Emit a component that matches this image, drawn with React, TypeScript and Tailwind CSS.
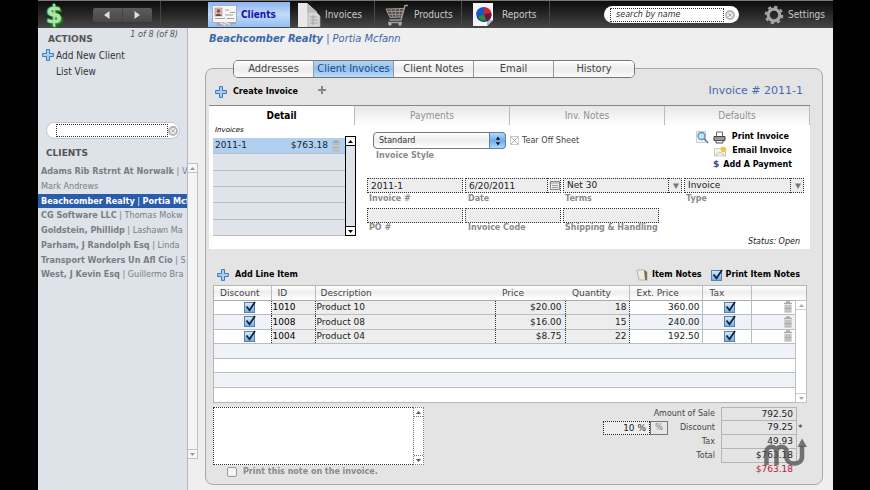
import { useState } from 'react';
import { clsx } from 'clsx';

const condensed = 'font-["DejaVu_Sans_Condensed","DejaVu_Sans",sans-serif]';
const caption = 'text-[8px] leading-[10px] font-bold text-[#8a8a8a]';
const field = 'block h-[15px] w-full min-w-0 border border-dotted border-[#333] bg-[#ededed] px-[3px] text-[9px] leading-[13px] text-[#222] rounded-none outline-none';

const clients = [
  { company: 'Adams Rib Rstrnt At Norwalk', contact: 'V' },
  { company: '', contact: 'Mark Andrews' },
  { company: 'Beachcomber Realty', contact: 'Portia Mcf' },
  { company: 'CG Software LLC', contact: 'Thomas Mokw' },
  { company: 'Goldstein, Phillidp', contact: 'Lashawn Ma' },
  { company: 'Parham, J Randolph Esq', contact: 'Linda' },
  { company: 'Transport Workers Un Afl Cio', contact: 'S' },
  { company: 'West, J Kevin Esq', contact: 'Guillermo Bra' },
];

const lineItems = [
  { id: '1010', description: 'Product 10', price: '$20.00', quantity: '18', ext: '360.00' },
  { id: '1008', description: 'Product 08', price: '$16.00', quantity: '15', ext: '240.00' },
  { id: '1004', description: 'Product 04', price: '$8.75', quantity: '22', ext: '192.50' },
];

const emptyRows = ['a', 'b', 'c', 'd'];

const totals = [
  { label: 'Amount of Sale', value: '792.50' },
  { label: 'Discount', value: '79.25' },
  { label: 'Tax', value: '49.93' },
  { label: 'Total', value: '$763.18' },
];

const clientTabs = ['Addresses', 'Client Invoices', 'Client Notes', 'Email', 'History'];
const detailTabs = ['Detail', 'Payments', 'Inv. Notes', 'Defaults'];

function PlusIcon() {
  return (
    <svg viewBox="0 0 12 12" className="h-3 w-3 shrink-0">
      <path d="M4.5 .6h3v3.9h3.9v3H7.500v3.900h-3V7.500H.6v-3h3.900z" fill="#a9cdf3" stroke="#3c78bd" />
    </svg>
  );
}

function TrashIcon() {
  return (
    <svg viewBox="0 0 10 12" className="block h-3 w-[10px] shrink-0">
      <path d="M1 2.500h8M3 1h4" stroke="#aaa" strokeWidth="1.500" />
      <path d="M1.800 4.500h6.400v6.700H1.800z" fill="#d6d6d6" stroke="#b0b0b0" strokeWidth=".7" />
      <path d="M3.800 5v6M6.200 5v6M2 7.500h6" stroke="#9c9c9c" strokeWidth=".7" />
    </svg>
  );
}

function ClearIcon() {
  return (
    <svg viewBox="0 0 10 10" className="h-[10px] w-[10px]">
      <circle cx="5" cy="5" r="4" fill="#eee" stroke="#b4b4b9" strokeWidth="1.800" />
      <path d="M3.300 3.300l3.400 3.400M6.700 3.300L3.300 6.700" stroke="#aaa" />
    </svg>
  );
}

function CardsIcon() {
  return (
    <svg viewBox="0 0 26 22" className="h-[22px] w-[26px]">
      <path d="M4 13l18-2 2 9-19 2z" fill="#9ba4b0" />
      <rect x=".5" y="1.500" width="24" height="17" fill="#f7f7f7" stroke="#aab" />
      <rect x="3" y="4" width="7" height="8" fill="#dcb9b4" stroke="#999" strokeWidth=".6" />
      <circle cx="6.500" cy="7" r="1.800" fill="#a2453e" />
      <path d="M3.500 12c.5-3 5.500-3 6 0z" fill="#555" />
      <path d="M13 6h4M18 8.500h5M13 11h8M3 14.500h10M15 14.500h7" stroke="#a3a3a3" />
      <path d="M8 19l6 2M12 18l6 2.500" stroke="#e0e0e0" strokeWidth="1.500" />
    </svg>
  );
}

function PagesIcon() {
  return (
    <svg viewBox="0 0 24 24" className="h-6 w-6">
      <path d="M1 0h9l10 9v15H1z" fill="#e8e8e8" />
      <path d="M10 0v9h10z" fill="#bcbcbc" />
      <path d="M11 9h8l4 4v11H11z" fill="#d6d6d6" stroke="#aaa" strokeWidth=".7" />
      <path d="M13 14h7M13 17h8M13 20h8M16 12v10" stroke="#999" strokeWidth=".8" />
    </svg>
  );
}

function CartIcon() {
  return (
    <svg viewBox="0 0 24 22" className="h-[22px] w-6" fill="none" stroke="#a09b97">
      <path d="M23 1.500h-3L16 16H4.500" strokeWidth="1.400" />
      <path d="M1 5l18-.5L16.500 13 5 13.500z" fill="#55504d" />
      <path d="M2 7.500h16M3.500 10.500h14M6 5l2 8.500M10 5l1 8.500M14.500 5L14 13.500" strokeWidth=".8" />
      <path d="M3 18.500h14" strokeWidth="1.500" />
      <circle cx="5" cy="20" r="1.300" fill="#ccc" />
      <circle cx="15" cy="20" r="1.300" fill="#ccc" />
    </svg>
  );
}

function ChartIcon() {
  return (
    <svg viewBox="0 0 20 23" className="h-[23px] w-5">
      <path d="M0 0h20v17l-6 6H0z" fill="#f5f5f5" />
      <path d="M20 17l-6 6v-6z" fill="#bbb" />
      <ellipse cx="11" cy="12.500" rx="7.500" ry="6.500" fill="#123c78" />
      <path d="M11 11V4a8 7 0 0 0-8 7l2 3z" fill="#1857c4" />
      <path d="M11 11V4a8 7 0 0 1 7.500 6L13 14z" fill="#c8283a" />
      <path d="M11 11l7.500-1c0 4-2 6.500-5.500 7z" fill="#7a1228" />
      <path d="M11 11l2 6.500c-4 .8-7-.5-8-3.500z" fill="#2b8a45" />
    </svg>
  );
}

function GearIcon() {
  return (
    <svg viewBox="0 0 20 20" className="h-5 w-5">
      <circle cx="10" cy="10" r="5.800" fill="none" stroke="#a5a5a5" strokeWidth="3.200" />
      <circle cx="10" cy="10" r="8.200" fill="none" stroke="#a5a5a5" strokeWidth="2.200" strokeDasharray="3.200 3.240" />
    </svg>
  );
}

function DownArrow() {
  return (
    <span className="pointer-events-none absolute inset-y-0 right-0 flex w-[14px] items-center justify-center border-l border-dotted border-[#333]">
      <svg viewBox="0 0 6 6" className="h-[6px] w-[6px]"><path d="M0 .5h6L3 6z" fill="#777" /></svg>
    </span>
  );
}

function Scrollbar({ className, cap, arrow }: { className: string; cap: string; arrow: string }) {
  return (
    <div className={clsx('flex shrink-0 flex-col justify-between border', className)}>
      <span className={clsx('flex h-[9px] items-center justify-center border-b', cap)}>
        <svg viewBox="0 0 5 3" className="h-[3px] w-[5px]"><path d="M0 3h5L2.500 0z" fill={arrow} /></svg>
      </span>
      <span className={clsx('flex h-[9px] items-center justify-center border-t', cap)}>
        <svg viewBox="0 0 5 3" className="h-[3px] w-[5px]"><path d="M0 0h5L2.500 3z" fill={arrow} /></svg>
      </span>
    </div>
  );
}

function Check({ label, id }: { label?: string; id?: string }) {
  const [on, setOn] = useState(true);
  return (
    <span className="relative block h-[11px] w-[11px] shrink-0">
      <input
        id={id}
        type="checkbox"
        aria-label={label}
        checked={on}
        onChange={() => setOn(!on)}
        className="block h-[11px] w-[11px] appearance-none border border-[#5c7fa6] bg-linear-to-b from-[#d5e8fa] to-[#6fb0ea]"
      />
      {on && (
        <svg viewBox="0 0 13 12" className="pointer-events-none absolute -top-px left-0 h-3 w-[13px]">
          <path d="M2.500 5.500l3 3.700L11 1" fill="none" stroke="#12233f" strokeWidth="1.800" />
        </svg>
      )}
    </span>
  );
}

function Header() {
  return (
    <header className={clsx('flex h-7 items-center border-t border-[#777] bg-linear-to-b from-[#0c0c0c] to-[#474747] text-[10px] text-[#c9c9c9]', condensed)}>
      <div className='ml-[7px] w-[18px] text-center font-["DejaVu_Sans",sans-serif] text-[24px] leading-[26px] font-bold text-[#b4e0ac] [text-shadow:1px_1px_0_#1f9c35,-1px_0_0_#1f9c35,0_-1px_0_#1f9c35,2px_2px_1px_#0d7a22]'>$</div>
      <div className="ml-[30px] grid h-[14px] w-[59px] grid-cols-2 rounded-xs bg-linear-to-b from-[#5c5c5c] to-[#484848]">
        <button aria-label="Previous" className="flex items-center justify-center border-r border-[#444]">
          <svg viewBox="0 0 6 8" className="h-2 w-[6px]"><path d="M5.500 0v8L0 4z" fill="#ddd" /></svg>
        </button>
        <button aria-label="Next" className="flex items-center justify-center">
          <svg viewBox="0 0 6 8" className="h-2 w-[6px]"><path d="M.5 0v8L6 4z" fill="#ddd" /></svg>
        </button>
      </div>
      <nav className="ml-2 flex h-full items-center border-l border-[#444] pl-[47px]">
        <a href="#clients" className="flex h-[25px] w-[82px] items-center gap-[3px] bg-linear-to-b from-[#8db4ee] via-[#c3dbf8] to-[#8fc0f5] pl-1 font-bold text-[#1414a8]">
          <CardsIcon />
          Clients
        </a>
        <a href="#invoices" className="flex h-full w-[85px] items-center gap-1 border-r border-[#484848] pl-[7px]"><PagesIcon />Invoices</a>
        <a href="#products" className="flex h-full w-[87px] items-center gap-[5px] border-r border-[#484848] pl-[10px]"><CartIcon />Products</a>
        <a href="#reports" className="flex h-full w-[88px] items-center gap-[9px] border-r border-[#484848] pl-[11px]"><ChartIcon />Reports</a>
      </nav>
      <div className="ml-auto flex h-[17px] w-[135px] items-center gap-px rounded-full bg-white pr-1 pl-[6px]">
        <input
          aria-label="Search by name"
          placeholder="search by name"
          className='h-[14px] min-w-0 flex-1 border border-dotted border-[#333] px-[5px] font-["DejaVu_Sans",sans-serif] text-[8px] text-[#333] italic outline-none placeholder:text-[#333]'
        />
        <ClearIcon />
      </div>
      <a href="#settings" className="mr-2 ml-[25px] flex items-center gap-1"><GearIcon />Settings</a>
    </header>
  );
}

function Sidebar() {
  const [selected, setSelected] = useState(2);
  return (
    <aside className={clsx('w-[150px] shrink-0 overflow-hidden border-r border-[#b5b8bd] bg-[#dee2e9] text-[9px]', condensed)}>
      <div className="flex h-[18px] justify-between pr-[9px] pl-[10px]">
        <h2 className='pt-[5px] font-["DejaVu_Sans",sans-serif] leading-[12px] font-bold text-[#555]'>ACTIONS</h2>
        <span className="pt-px leading-[11px] text-[#555] italic">1 of 8 (of 8)</span>
      </div>
      <button className="flex h-[18px] items-center gap-[2px] pl-1 text-[10px] text-[#333]"><PlusIcon />Add New Client</button>
      <button className="block h-4 pl-[18px] text-[10px] leading-4 text-[#333]">List View</button>
      <div className="mt-[42px] ml-2 flex h-[17px] w-[134px] items-center rounded-full border border-[#c2c5ca] bg-white pr-px pl-[9px]">
        <input aria-label="Find client" className="h-[13px] min-w-0 flex-1 border border-dotted border-[#333] px-1 outline-none" />
        <ClearIcon />
      </div>
      <h2 className='mt-2 mb-[5px] pl-2 font-["DejaVu_Sans",sans-serif] leading-[12px] font-bold text-[#555]'>CLIENTS</h2>
      <ul className="grid h-[118px] grid-rows-8">
        {clients.map((c, i) => (
          <li key={c.contact} className={clsx('min-h-0', i === selected ? 'bg-[#2a5caa] text-white' : 'text-[#7a7d82]')}>
            <button onClick={() => setSelected(i)} className="block w-full overflow-hidden pl-[3px] text-left leading-[15px] whitespace-nowrap">
              {c.company && <b>{c.company}</b>}
              {c.company && ' | '}
              <span className={i === selected ? 'font-bold' : ''}>{c.contact}</span>
            </button>
          </li>
        ))}
      </ul>
    </aside>
  );
}

function InvoiceList() {
  return (
    <div className="w-[143px] shrink-0">
      <div className="h-[11px] pl-[2px] text-[7px] leading-[10px] italic">Invoices</div>
      <div className="flex">
        <ul className="mt-[2px] grid h-[98px] flex-1 grid-rows-6 bg-[#dfe3ea] text-[9px] text-[#222]">
          <li className="flex items-center border-b border-[#b9bcc2] bg-[#b0d0f2] pr-1 pl-[2px]">
            <span>2011-1</span>
            <span className="mr-[3px] ml-auto">$763.18</span>
            <TrashIcon />
          </li>
          {['b', 'c', 'd', 'e', 'f'].map(k => <li key={k} className="border-b border-[#b9bcc2]" />)}
        </ul>
        <Scrollbar className="h-[100px] w-[11px] border-black bg-[#dfe3ea]" cap="border-black bg-white" arrow="#000" />
      </div>
    </div>
  );
}

function InvoiceForm() {
  return (
    <div className="min-w-0 flex-1 pt-[5px] pr-[6px] pl-[11px]">
      <div className="flex h-12 items-start pl-[6px]">
        <div className="mt-[2px] w-[133px]">
          <div className="relative">
            <select id="style" className="block h-[17px] w-full appearance-none rounded-sm border border-[#777] bg-linear-to-b from-white via-[#ededed] to-white px-[5px] text-[8px] text-[#333]">
              <option>Standard</option>
            </select>
            <span className="pointer-events-none absolute inset-y-0 right-0 flex w-[17px] items-center justify-center rounded-r-sm border border-[#5a82b5] bg-linear-to-b from-[#bcd9f6] via-[#6fabeb] to-[#a9dafa]">
              <svg viewBox="0 0 6 10" className="h-[10px] w-[6px]"><path d="M.8 3.800h4.400L3 .5zM.8 6.200h4.400L3 9.500z" fill="#111" /></svg>
            </span>
          </div>
          <label htmlFor="style" className={clsx('mt-[2px] block pl-[3px]', caption)}>Invoice Style</label>
        </div>
        <label className={clsx('mt-1 ml-1 flex items-center gap-[3px] text-[9px] leading-[12px] text-[#444]', condensed)}>
          <span className="relative h-[9px] w-[9px]">
            <input type="checkbox" className="block h-[9px] w-[9px] appearance-none border border-[#ccc]" />
            <svg viewBox="0 0 9 9" className="pointer-events-none absolute inset-0 h-[9px] w-[9px]"><path d="M1 1l7 7M8 1L1 8" stroke="#aaa" strokeWidth=".9" /></svg>
          </span>
          Tear Off Sheet
        </label>
        <div className="ml-auto flex flex-col items-end pr-3 text-[8px] font-bold text-black">
          <button className="flex h-[14px] items-center gap-1 pr-[3px]">
            <svg viewBox="0 0 13 13" className="h-[13px] w-[13px]">
              <path d="M.5.500h9v11h-9z" fill="#f2f2f2" stroke="#ccc" />
              <circle cx="5.500" cy="5" r="3.500" fill="#bfe4fa" stroke="#5f94bd" strokeWidth="1.300" />
              <path d="M8 7.500l4 4.500" stroke="#7c7c94" strokeWidth="1.800" />
            </svg>
            <svg viewBox="0 0 13 13" className="mr-[2px] h-[13px] w-[13px]">
              <path d="M3.500 1h6v5h-6z" fill="#fff" stroke="#666" />
              <path d="M1 5.500h11v4H1z" fill="#999" stroke="#444" />
              <path d="M3 9.500h7v2.500H3z" fill="#eee" stroke="#555" />
            </svg>
            Print Invoice
          </button>
          <button className="flex h-[14px] items-center gap-[5px]">
            <svg viewBox="0 0 13 11" className="h-[11px] w-[13px]">
              <path d="M.5 2.500h11v7.500H.5z" fill="#f6f2e4" stroke="#d0cdc2" />
              <path d="M.5 10l5.500-4 5.500 4" fill="none" stroke="#c9c5b5" />
              <path d="M7 1h4.500l1 2.500-2 2.500H8L6.500 3.500z" fill="#f0c64a" />
            </svg>
            Email Invoice
          </button>
          <button className="flex h-[14px] items-center gap-1"><span className="text-[9px] text-[#3d3d99]">$</span>Add A Payment</button>
        </div>
      </div>

      <div className="grid grid-cols-[96fr_96fr_119fr_120fr] gap-x-[2px]">
        <div>
          <input id="number" defaultValue="2011-1" className={field} />
          <label htmlFor="number" className={clsx('mt-px block pl-[2px]', caption)}>Invoice #</label>
        </div>
        <div>
          <div className="relative">
            <input id="date" defaultValue="6/20/2011" className={field} />
            <span className="pointer-events-none absolute inset-y-0 right-0 flex w-[14px] items-center justify-center border-l border-dotted border-[#333]">
              <svg viewBox="0 0 10 9" className="h-[9px] w-[10px]">
                <path d="M.5.500h9v8h-9z" fill="#eee" stroke="#888" />
                <path d="M1 2h8M2 4.500h6M2 6.500h6" stroke="#999" />
              </svg>
            </span>
          </div>
          <label htmlFor="date" className={clsx('mt-px block pl-[3px]', caption)}>Date</label>
        </div>
        <div>
          <div className="relative">
            <select id="terms" className={clsx('appearance-none', field)}><option>Net 30</option></select>
            <DownArrow />
          </div>
          <label htmlFor="terms" className={clsx('mt-px block pl-[2px]', caption)}>Terms</label>
        </div>
        <div>
          <div className="relative">
            <select id="type" className={clsx('appearance-none', field)}><option>Invoice</option></select>
            <DownArrow />
          </div>
          <label htmlFor="type" className={clsx('mt-px block pl-[2px]', caption)}>Type</label>
        </div>
      </div>

      <div className="mt-1 grid grid-cols-[96fr_96fr_96fr_143fr] gap-x-[2px]">
        <div>
          <input id="po" className={field} />
          <label htmlFor="po" className={clsx('block pl-[2px]', caption)}>PO #</label>
        </div>
        <div>
          <input id="code" className={field} />
          <label htmlFor="code" className={clsx('block pl-[3px]', caption)}>Invoice Code</label>
        </div>
        <div>
          <input id="shipping" className={field} />
          <label htmlFor="shipping" className={clsx('block pl-[2px] whitespace-nowrap', caption)}>Shipping & Handling</label>
        </div>
      </div>
      <div className="mt-1 pr-1 text-right text-[8px] leading-[10px] text-[#222] italic">Status: Open</div>
    </div>
  );
}

function LineItems() {
  const cell = 'border-r border-[#b9bcc2] p-0';
  const head = 'border-r border-[#b9bcc2] p-0 text-left font-normal';
  const dotted = 'border border-dotted border-[#333] bg-[#ededed] p-0';
  return (
    <div className="relative mr-[3px] ml-1 border border-[#b5b5b5] bg-white">
      <table className="h-[116px] w-full table-fixed border-collapse text-[9px] leading-[12px] text-[#222]">
        <colgroup>
          <col className="w-[57px]" />
          <col className="w-[44px]" />
          <col />
          <col className="w-[70px]" />
          <col className="w-[64px]" />
          <col className="w-[73px]" />
          <col className="w-[49px]" />
          <col className="w-[44px]" />
          <col className="w-[11px]" />
        </colgroup>
        <thead>
          <tr className="h-[14px] border-b border-[#aaa] bg-linear-to-b from-white via-[#eee] to-white text-[#444]">
            <th className={clsx(head, 'pl-[6px]')}>Discount</th>
            <th className={clsx(head, 'pl-[6px]')}>ID</th>
            <th className="p-0 pl-[5px] text-left font-normal">Description</th>
            <th className="p-0 pl-[7px] text-left font-normal">Price</th>
            <th className={clsx(head, 'pl-[7px]')}>Quantity</th>
            <th className={clsx(head, 'pl-[7px]')}>Ext. Price</th>
            <th className={clsx(head, 'pl-[7px]')}>Tax</th>
            <th className="p-0" />
            <th className="p-0" />
          </tr>
        </thead>
        <tbody>
          {lineItems.map((item, i) => (
            <tr key={item.id} className={clsx('h-[14px] border-b border-[#b9bcc2]', i % 2 === 1 && 'bg-[#eff2f7]')}>
              <td className="p-0 pl-[30px]"><Check label={`Discount ${item.id}`} /></td>
              <td className={clsx(dotted, 'pl-px text-black')}>{item.id}</td>
              <td className={clsx(dotted, 'pl-px')}>{item.description}</td>
              <td className={clsx(dotted, 'pr-[3px] text-right')}>{item.price}</td>
              <td className={clsx(dotted, 'pr-[2px] text-right')}>{item.quantity}</td>
              <td className={clsx(cell, 'pr-[2px] text-right')}>{item.ext}</td>
              <td className={clsx(cell, 'pl-[21px]')}><Check label={`Tax ${item.id}`} /></td>
              <td className="p-0 pl-[31px]"><TrashIcon /></td>
              <td className="p-0" />
            </tr>
          ))}
          {emptyRows.map((k, i) => (
            <tr key={k} className={clsx('h-[14px]', i < 3 && 'border-b border-[#b9bcc2]', i % 2 === 0 && 'bg-[#eff2f7]')}>
              <td colSpan={9} className="p-0" />
            </tr>
          ))}
        </tbody>
      </table>
      <Scrollbar className="absolute top-[14px] -right-px -bottom-px w-3 border-[#c2c2c2] bg-white" cap="border-[#ccc] bg-white" arrow="#aaa" />
    </div>
  );
}

function Totals() {
  return (
    <div className="grid w-[201px] grid-cols-[1fr_76px_7px] text-[8px] leading-[14px] text-[#444]">
      {totals.map((t, i) => (
        <div key={t.label} className="contents">
          <div className="flex h-[14px] items-center justify-end pr-[6px]">
            {i === 1 && (
              <span className="mr-auto flex">
                <input aria-label="Discount percent" defaultValue="10 %" className="h-[14px] w-[47px] border border-dotted border-[#222] bg-[#eee] pr-[3px] text-right text-[9px] text-[#222] outline-none" />
                <button className="h-[14px] w-[18px] border border-[#777] bg-[#e6e6e6] text-[8px] leading-[12px] text-[#777]">%</button>
              </span>
            )}
            <span>{t.label}</span>
          </div>
          <div className={clsx('h-[14px] border-x border-b border-[#b5b5b5] pr-[3px] text-right text-[9px] leading-[13px] text-[#222]', i === 0 && 'border-t')}>{t.value}</div>
          <div className="pl-px text-[9px] text-[#222]">{i === 1 && '*'}</div>
        </div>
      ))}
      <div className="col-start-2 pr-1 text-right text-[9px] leading-[13px] text-[#b32340]">$763.18</div>
    </div>
  );
}

function Watermark() {
  return (
    <svg viewBox="0 0 46 30" className="pointer-events-none absolute right-[13px] bottom-[17px] h-[30px] w-[46px]" fill="none" stroke="#555" strokeOpacity=".8" strokeWidth="4.500">
      <path d="M3.500 28V14.500c0-6.500 10-6.500 10 0V28M13.500 14.500c0-6.500 10-6.500 10 0V20c0 8.500 15.500 9 15.500 0V9" />
      <path d="M34.500 10L39 1.500l5 8.500z" fill="#555" fillOpacity=".8" stroke="none" />
    </svg>
  );
}

export default function App() {
  const [tab, setTab] = useState('Client Invoices');
  const [detail, setDetail] = useState('Detail');

  return (
    <div className="min-h-screen bg-black pr-[37px] pl-[38px]">
      <div className='flex min-h-screen flex-col bg-[#efefef] font-["DejaVu_Sans",sans-serif]'>
        <Header />
        <div className="flex flex-1">
          <Sidebar />
          <Scrollbar className="mt-[135px] mb-[31px] w-[10px] border-l-0 border-[#c2c2c2] bg-[#f4f4f4]" cap="border-[#c2c2c2] bg-[#f7f7f7]" arrow="#999" />
          <main className="min-w-0 flex-1 pr-[10px] pl-[7px]">
            <h1 className={clsx('h-10 pt-[3px] pl-1 text-[11px] leading-[15px] text-[#3d68a8] italic', condensed)}>
              <b>Beachcomber Realty</b> | <span>Portia Mcfann</span>
            </h1>
            <section className="relative rounded-lg border border-[#a9a9a9] bg-[#e4e4e4] pr-3 pb-[7px] pl-[3px]">
              <div className={clsx('relative -mt-[9px] ml-6 grid h-[18px] w-[402px] grid-cols-5 overflow-hidden rounded-[5px] border border-[#777] text-[11px] leading-4 text-[#444]', condensed)}>
                {clientTabs.map(t => (
                  <button
                    key={t}
                    onClick={() => setTab(t)}
                    className={clsx(
                      'border-r border-[#999] last:border-r-0',
                      t === tab ? 'bg-linear-to-b from-[#b5d3f5] via-[#8fc0f2] to-[#b8ddfa] text-[#234a80]' : 'bg-linear-to-b from-white via-[#ececec] to-[#fafafa]'
                    )}
                  >
                    {t}
                  </button>
                ))}
              </div>

              <div className="flex h-[27px] items-center pr-[7px] pl-[6px]">
                <button className="flex items-center gap-[6px] text-[8px] font-bold text-black"><PlusIcon />Create Invoice</button>
                <svg viewBox="0 0 8 8" className="mb-1 ml-5 h-2 w-2"><path d="M4 0v8M0 4h8" stroke="#888" strokeWidth="2" /></svg>
                <span className="ml-auto text-[11px] text-[#4a69ad]">Invoice # 2011-1</span>
              </div>

              <div className="border-t border-[#888] bg-white">
                <div className="grid h-[19px] grid-cols-[146fr_155fr_155fr_145fr]">
                  {detailTabs.map(t => (
                    <button
                      key={t}
                      onClick={() => setDetail(t)}
                      className={clsx(
                        'border-r border-[#bbb] text-[10px]',
                        condensed,
                        t === detail ? 'bg-white font-bold text-black' : 'bg-linear-to-b from-[#e6e6e6] to-white text-[#909090]'
                      )}
                    >
                      {t}
                    </button>
                  ))}
                </div>
                <div className="flex pb-[2px] pl-1">
                  <InvoiceList />
                  <InvoiceForm />
                </div>
              </div>

              <div className="flex h-9 items-end pr-[10px] pb-1 pl-2 text-[8px] font-bold text-black">
                <button className="flex items-center gap-[6px]"><PlusIcon />Add Line Item</button>
                <button className="ml-auto flex items-center gap-1">
                  <svg viewBox="0 0 12 12" className="h-3 w-3">
                    <path d="M1 1h7l3 2v8H3z" fill="#efeadb" stroke="#b9b4a4" />
                    <path d="M8 1l3 2v8.500l-2-1z" fill="#77705f" />
                  </svg>
                  Item Notes
                </button>
                <label htmlFor="print-notes" className="ml-[9px] flex items-center gap-1"><Check id="print-notes" />Print Item Notes</label>
              </div>

              <LineItems />

              <div className="mt-1 flex items-start justify-between pr-[6px] pl-1">
                <div>
                  <div className="flex h-[58px] w-[211px]">
                    <textarea aria-label="Invoice note" className="min-w-0 flex-1 resize-none border border-r-0 border-dotted border-[#333] bg-white p-1 text-[9px] outline-none" />
                    <Scrollbar className="w-[11px] border-dotted border-[#777] bg-white" cap="border-dotted border-[#777]" arrow="#555" />
                  </div>
                  <label className={clsx('mt-[2px] ml-[14px] flex items-center gap-[6px]', caption)}>
                    <input type="checkbox" className="h-[10px] w-[10px] appearance-none rounded-[2px] border border-[#999] bg-[#f4f4f4]" />
                    Print this note on the invoice.
                  </label>
                </div>
                <Totals />
              </div>
              <Watermark />
            </section>
          </main>
        </div>
      </div>
    </div>
  );
}
